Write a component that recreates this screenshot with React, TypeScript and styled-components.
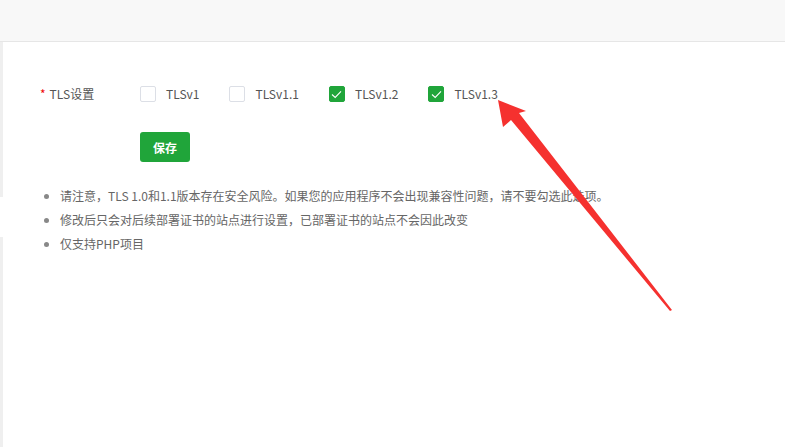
import React, { useState } from 'react';
import styled, { createGlobalStyle } from 'styled-components';

const GlobalStyle = createGlobalStyle`
  html, body {
    margin: 0;
    padding: 0;
    background: #fff;
  }
  body {
    font-family: "Noto Sans CJK SC", "Noto Sans", sans-serif;
    font-size: 12px;
    color: #555;
  }
`;

const Page = styled.div`
  position: relative;
  width: 785px;
  height: 447px;
  overflow: hidden;
  display: flex;
  flex-direction: column;
`;

const TopBar = styled.div`
  height: 41px;
  background: #f8f8f8;
  border-bottom: 1px solid #e6e6e6;
  flex-shrink: 0;
`;

const Body = styled.div`
  flex: 1;
  display: flex;
`;

const Edge = styled.div`
  width: 3px;
  display: flex;
  flex-direction: column;
`;

const EdgePiece = styled.div<{ $h?: number; $blank?: boolean }>`
  height: ${(p) => (p.$h ? `${p.$h}px` : 'auto')};
  flex: ${(p) => (p.$h ? 'none' : 1)};
  background: ${(p) => (p.$blank ? '#fff' : '#efefef')};
`;

const Content = styled.div`
  flex: 1;
  padding: 36px 0 0 37px;
`;

const FormRow = styled.div`
  display: flex;
  align-items: center;
  height: 32px;
`;

const Label = styled.div`
  width: 100px;
  color: #555;
  font-size: 12px;
  line-height: 16px;
`;

const Star = styled.span`
  color: #ef0808;
  margin-right: 4px;
`;

const Options = styled.div`
  display: flex;
  align-items: center;
`;

const Option = styled.label`
  display: flex;
  align-items: center;
  margin-right: 30px;
  cursor: pointer;
  font-size: 12px;
  color: #555;
  line-height: 16px;
`;

const Box = styled.span<{ $checked: boolean }>`
  width: 16px;
  height: 16px;
  box-sizing: border-box;
  border-radius: 2px;
  border: 1px solid ${(p) => (p.$checked ? '#20a53a' : '#dcdfe6')};
  background: ${(p) => (p.$checked ? '#20a53a' : '#fff')};
  margin-right: 10px;
  display: flex;
  align-items: center;
  justify-content: center;
`;

const SaveButton = styled.button`
  margin: 22px 0 0 100px;
  width: 50px;
  height: 30px;
  border: none;
  border-radius: 3px;
  background: #20a53a;
  color: #fff;
  font-family: inherit;
  font-size: 12px;
  font-weight: 700;
  cursor: pointer;
`;

const Notes = styled.ul`
  margin: 22px 0 0;
  padding: 0 0 0 20px;
  list-style: disc;
  color: #666;
  font-size: 12px;
  line-height: 24px;

  li::marker {
    color: #888;
  }
`;

const ArrowLayer = styled.svg`
  position: absolute;
  left: 0;
  top: 0;
  pointer-events: none;
`;

const versions = ['TLSv1', 'TLSv1.1', 'TLSv1.2', 'TLSv1.3'];

export default function App() {
  const [checked, setChecked] = useState<Record<string, boolean>>({
    'TLSv1.2': true,
    'TLSv1.3': true,
  });

  return (
    <Page>
      <GlobalStyle />
      <TopBar />
      <Body>
        <Edge>
          <EdgePiece $h={155} />
          <EdgePiece $h={40} $blank />
          <EdgePiece />
        </Edge>
        <Content>
          <FormRow>
            <Label>
              <Star>*</Star>TLS设置
            </Label>
            <Options>
              {versions.map((v) => (
                <Option key={v} onClick={() => setChecked({ ...checked, [v]: !checked[v] })}>
                  <Box $checked={!!checked[v]}>
                    {checked[v] && (
                      <svg width="11" height="9" viewBox="0 0 11 9">
                        <path d="M1 4.5 L4.2 7.5 L10 1.3" fill="none" stroke="#fff" strokeWidth="1.1" />
                      </svg>
                    )}
                  </Box>
                  {v}
                </Option>
              ))}
            </Options>
          </FormRow>
          <SaveButton>保存</SaveButton>
          <Notes>
            <li>请注意，TLS 1.0和1.1版本存在安全风险。如果您的应用程序不会出现兼容性问题，请不要勾选此选项。</li>
            <li>修改后只会对后续部署证书的站点进行设置，已部署证书的站点不会因此改变</li>
            <li>仅支持PHP项目</li>
          </Notes>
        </Content>
      </Body>
      <ArrowLayer width="785" height="447" viewBox="0 0 785 447">
        <polygon
          points="498,100 503,127 511,120 670,311 672,310 519,113 526,111"
          fill="#f5312f"
        />
      </ArrowLayer>
    </Page>
  );
}
